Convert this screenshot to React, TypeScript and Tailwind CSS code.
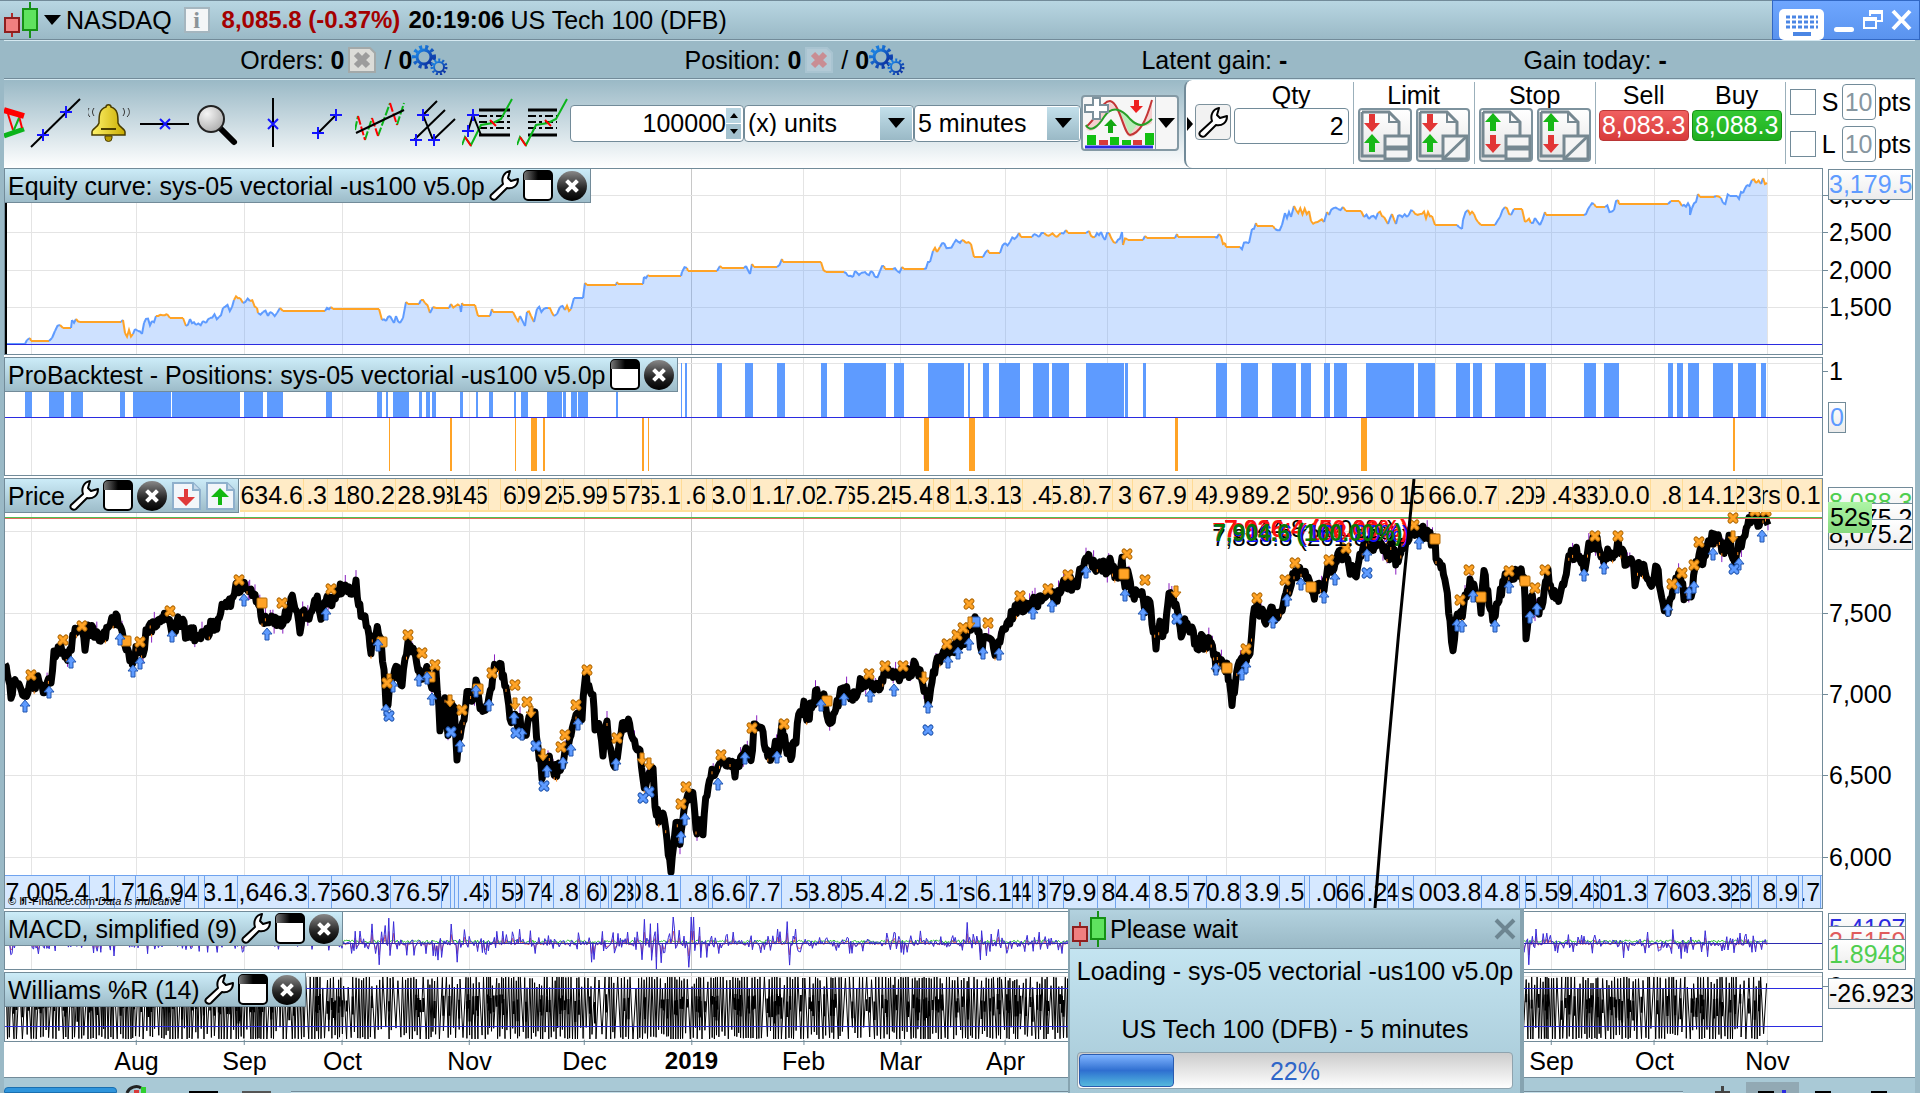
import { useState } from 'react';
import type { ReactNode } from 'react';

type Point = [number, number];
type MarkerKind = 'sellX' | 'buyX' | 'up' | 'down' | 'sellBox' | 'buyBox';

const MONTHS: [number, string][] = [
  [136, 'Aug'], [244, 'Sep'], [342, 'Oct'], [469, 'Nov'], [584, 'Dec'], [691, '2019'], [803, 'Feb'],
  [900, 'Mar'], [1005, 'Apr'], [1551, 'Sep'], [1654, 'Oct'], [1767, 'Nov'],
];
const GRID_X = [31, 136, 244, 342, 469, 584, 691, 803, 900, 1005, 1107, 1226, 1325, 1435, 1551, 1654, 1767];

// "o" starts a run spent out of the market, "b" a run with an open position
const EQUITY = `b5,344 25,344 27,340 30,338 o31,341 49,341 b52,338 55,331 60,325 o63,328 71,328 b72,320 76,319 o80,322 121,322 b123,320
o125,333 133,334 b135,329 138,331 142,334 144,323 152,321 156,316 o167,314 170,318 183,318 186,326 b190,319 196,325 203,321 206,323
210,318 219,317 223,308 232,307 234,300 o240,298 243,303 b250,301 o257,308 258,313 b263,312 268,316 270,312 277,313 280,308 o283,311
325,311 b331,307 o333,309 379,309 382,320 b386,321 390,316 394,323 396,316 400,323 403,318 406,302 o408,304 419,304 b421,300 o425,303
430,313 b433,307 o436,308 449,308 b451,304 o460,306 b461,312 462,303 o463,305 475,305 478,316 490,316 b492,309 o493,312 513,312
516,318 520,316 b525,326 527,312 o531,316 534,322 b537,309 548,308 o554,316 b557,314 560,307 565,310 o571,309 b574,298 583,298
585,283 o587,285 616,285 b617,282 o618,284 643,284 b644,277 648,275 o649,276 681,276 b682,272 687,268 o688,271 717,271 b720,266
o722,268 744,268 b746,266 750,274 752,264 o754,267 777,267 b782,259 o783,262 821,262 826,272 844,272 b848,276 853,277 855,271 861,273
871,271 875,277 880,271 884,266 o885,269 893,269 b897,271 902,267 o904,269 924,269 b930,262 933,251 o937,252 940,247 b944,243 949,248
954,243 962,240 o966,243 971,244 974,257 983,257 b988,250 o989,253 1000,253 b1005,243 1010,242 1019,233 o1021,237 1032,237 b1034,234
1039,237 1044,233 o1048,236 1057,237 1061,233 b1066,230 o1068,233 1086,233 b1089,231 o1095,237 b1101,232 1105,240 1109,233
o1116,243 b1122,232 1123,245 o1127,239 1128,240 1143,240 b1145,236 o1147,238 1175,238 b1177,234 o1178,237 1215,237 b1219,234
o1225,243 1226,247 1240,247 b1248,243 1249,243 1252,229 1256,223 o1257,226 1273,226 1275,229 b1282,225 1285,213 1291,217 1294,206
o1296,210 1309,211 1311,221 1324,222 b1327,212 o1329,215 b1338,209 1343,207 o1346,211 1361,211 1364,217 b1369,219 1378,213 o1384,217
1388,224 b1392,214 o1396,224 b1400,215 1407,217 1413,211 o1420,214 1432,216 1435,225 1457,225 b1459,227 1462,229 1463,220 1468,210
o1474,214 1478,222 1481,225 1495,225 b1500,217 1505,207 o1511,215 b1514,209 o1522,209 1525,222 1531,223 b1535,218 1540,225 1545,212
o1546,215 1584,215 b1590,206 1594,204 o1596,207 1605,207 b1614,210 1618,200 o1619,204 1668,204 b1671,201 o1679,201 1682,206
b1690,207 1690,215 1692,208 1698,194 o1700,197 1714,197 b1716,196 o1721,198 b1723,203 1730,196 1737,196 1743,193 1747,185 1752,180
o1756,183 1761,184 b1763,178 o1767,183`;

const LONGS = `25-32 49-64 71-83 120-125 133-171 172-240 244-263 267-283 326-332 377-382 386-388 393-409 419-422 426-430 432-436
460-463 476-478 489-493 514-516 521-528 547-562 563-566 571-577 578-588 616-618 681-682 685-687 717-722 745-753 777-785 821-827
844-886 894-904 928-964 968-970 983-989 999-1020 1033-1049 1052-1069 1086-1124 1125-1128 1143-1146 1216-1227 1241-1258 1272-1296
1301-1311 1324-1330 1334-1347 1366-1414 1418-1435 1456-1470 1473-1482 1495-1525 1530-1546 1584-1596 1604-1619 1668-1673 1677-1683
1688-1699 1713-1733 1738-1756 1761-1766`;
const SHORTS = '389-390 450-452 515-516 531-537 543-545 642-644 648-649 924-929 969-975 1175-1178 1361-1367 1733-1735';

const PRICE = `5,664 11,693 15,680 24,696 29,684 33,693 39,676 42,690 51,680 54,657 61,648 65,659 70,652 74,634 80,628 85,645 88,631
98,635 103,641 109,622 116,618 122,630 126,643 131,662 136,652 143,652 146,633 153,627 158,618 167,618 173,628 178,622 184,627
187,639 191,630 196,637 202,633 208,634 212,625 218,625 222,608 227,602 233,599 236,588 243,590 251,585 255,597 261,613 263,624
269,621 278,623 284,618 288,613 291,598 296,608 300,627 304,612 309,618 316,597 321,616 327,603 333,598 339,593 344,583 349,588
356,587 361,613 365,617 369,638 371,648 376,628 381,643 384,670 386,700 388,702 392,673 396,670 402,685 405,657 408,642 412,650
418,667 422,682 428,667 433,690 436,673 440,725 445,692 448,733 451,703 454,703 457,758 460,733 464,717 467,693 473,700 476,677
480,703 484,712 489,697 493,673 496,662 501,670 506,685 510,720 515,717 520,723 525,737 529,713 535,717 538,750 542,773 548,760
553,772 559,770 565,753 571,737 576,713 582,713 586,677 593,692 595,723 600,730 603,752 607,723 612,762 616,765 620,733 626,720
632,733 637,747 640,753 643,785 647,777 653,767 655,807 660,820 663,808 667,843 671,873 676,817 680,840 684,807 688,798 694,798
696,832 698,823 703,833 707,790 712,775 718,768 721,760 726,768 730,757 735,772 742,757 746,745 751,757 754,730 758,728 763,737
769,757 773,748 779,747 782,730 787,752 792,753 796,737 800,710 804,708 808,717 813,702 818,692 824,697 827,715 831,718 837,703
843,688 849,692 854,697 859,685 867,683 878,690 884,673 892,677 898,680 906,667 909,678 914,667 920,673 924,687 928,700 932,683
936,667 941,657 947,652 953,647 959,642 966,637 971,633 975,613 979,637 982,648 986,637 990,632 995,650 1000,643 1004,630 1007,622
1014,613 1020,605 1024,610 1031,600 1039,602 1045,593 1056,597 1061,587 1069,583 1076,585 1082,567 1090,558 1096,567 1100,560
1106,572 1110,558 1116,580 1122,560 1125,583 1129,570 1133,598 1137,587 1142,597 1145,607 1150,598 1152,627 1156,645 1160,627
1164,633 1169,597 1176,603 1180,633 1186,622 1192,630 1197,648 1200,638 1204,645 1210,642 1216,663 1220,657 1227,670 1232,700
1238,667 1244,660 1250,650 1253,620 1257,603 1261,613 1267,620 1271,612 1276,618 1282,612 1286,593 1290,587 1294,573 1301,573
1308,580 1312,597 1318,588 1324,585 1329,567 1334,567 1339,553 1345,553 1349,567 1355,575 1361,550 1365,545 1372,545 1379,537
1387,560 1392,547 1397,562 1402,547 1409,537 1416,532 1423,532 1430,537 1435,543 1436,560 1441,563 1446,587 1450,617 1453,655
1456,620 1461,617 1465,600 1470,582 1475,587 1479,603 1481,607 1484,573 1489,603 1494,620 1499,600 1504,577 1510,573 1517,572
1524,577 1526,632 1531,600 1539,610 1543,597 1548,573 1553,593 1560,595 1565,573 1570,553 1579,553 1585,568 1590,543 1597,542
1601,560 1609,553 1615,558 1618,545 1625,560 1631,555 1635,582 1640,565 1645,570 1650,588 1657,563 1663,607 1668,615 1673,583
1680,573 1684,593 1690,598 1696,567 1699,552 1704,562 1707,542 1717,538 1723,555 1729,538 1734,562 1739,545 1745,542 1749,520
1753,513 1758,523 1768,522`;

const MARKERS: Record<MarkerKind, string> = {
  sellBox: '262,603 126,641 382,642 430,677 478,689 827,701 1124,574 1227,668 1311,587 1435,539 1481,597 1525,581',
  buyBox: '975,622',
  down: '389,680 450,701 515,704 531,712 543,755 642,759 649,764 924,678 970,623 1176,592 1733,537',
  up: `25,706 49,692 71,662 120,639 133,671 140,663 172,636 244,600 267,634 326,614 378,645 386,710 393,686 419,680 427,678
432,699 460,746 476,691 489,705 514,718 522,734 547,771 563,763 571,750 578,724 616,764 681,837 685,819 718,784 745,758 777,757
821,705 844,699 870,696 894,690 928,707 948,662 958,653 969,644 983,653 999,654 1033,613 1052,606 1086,572 1125,595 1143,614
1216,669 1242,674 1246,667 1273,622 1287,600 1301,584 1324,597 1335,579 1367,555 1419,543 1457,625 1462,626 1473,596 1495,626
1509,587 1530,617 1537,609 1584,575 1604,568 1668,610 1677,587 1689,593 1694,587 1713,554 1739,564 1762,536`,
  sellX: `31,675 63,640 82,626 140,642 170,611 239,580 282,603 331,589 387,683 408,635 422,653 435,665 462,710 492,673 515,685
527,702 561,747 565,735 576,705 587,670 617,738 686,787 681,804 721,755 752,728 784,724 869,674 885,666 903,666 947,644 957,635
963,628 969,604 988,623 1020,596 1048,589 1068,575 1127,554 1145,580 1246,649 1257,598 1285,580 1295,563 1329,560 1346,548
1414,525 1460,600 1469,570 1509,571 1535,588 1545,570 1595,536 1618,536 1672,584 1682,573 1694,565 1699,542 1733,518 1755,511 1766,511`,
  buyX: '389,716 451,732 516,733 536,746 544,786 649,792 643,798 928,730 1177,619 1367,573 1734,569',
};

// start x | visible tail of the label
const HIGHS = `240|634.6 304|.3 328|1 348|80.2 396|28.9 447|8 455|14 478|6 489| 501|6 518|0 527|9 542|2 559|5 564|5.9 597|9 609|5
627|7 642|3 652|5.1 682|.6 707| 713|3.0 747| 751|1.1 787|7.0 817|2.7 849|65.2 892|45.4 934|8 951|1 969|.3 989|.1 1011|3 1023|.4
1053|5.8 1084|0.7 1113|3 1133|67.9 1188| 1193|4 1210|9.9 1240|89.2 1291|5 1312|0 1325|2.9 1351|5 1361|6 1375|0 1395|1 1414|5
1426|66.0 1478|.7 1499|.2 1526|0 1536|9 1547|.4 1573|3 1588|3 1600|0 1610|10.0 1651|.8 1683|14.1 1737|2 1747|3 1763|rs 1782|0.1`;
const LOWS = `5|7,005.4 90|.1 115|7 136|16.9 185|4 199| 205|3.1 238|,646.3 309|.7 332|560.3 391|76.5 442|7 451| 455| 459|.4 484|6
491| 497|5 516|9 525|7 542|4 554|.8 580| 586|6 601|0 609| 612|2 628|3 636|0 643|8.1 681|.8 709| 713|6.6 747| 750|7.7 782|.5
810|3.8 842|05.4 886|.2 909|.5 935|.1 960|rs 977|6.1 1013|4 1023|4 1033| 1039|3 1048|7 1064|9.9 1098|8 1117|4.4 1151|8.5 1190|7
1208|0.8 1242|3.9 1281|.5 1306| 1311|.0 1338|6 1351|6 1366|.2 1389|4 1400|s 1415|003.8 1483|4.8 1521| 1527|5 1538|.5 1560|9
1574|.4 1595|6 1602|01.3 1649|7 1669|603.3 1733|2 1742|6 1753| 1760|8 1778|.9 1800| 1804|.7`;

const toPoints = (s: string): Point[] => s.trim().split(/\s+/).map((p) => p.split(',').map(Number) as Point);
const toRanges = (s: string): Point[] => s.trim().split(/\s+/).map((p) => p.split('-').map(Number) as Point);

const makeRandom = (seed: number) => {
  let s = seed;
  return () => {
    s = (s * 1664525 + 1013904223) % 4294967296;
    return s / 4294967296;
  };
};

const buildEquity = () => {
  const rnd = makeRandom(7);
  const runs: { color: string; d: string }[] = [];
  let area = 'M5,344';
  let last: Point = [5, 344];
  let color = '#5e9bff';
  EQUITY.trim().split(/\s+/).forEach((raw) => {
    if (raw[0] === 'b') color = '#5e9bff';
    if (raw[0] === 'o') color = '#ffa326';
    const [x, y] = raw.replace(/[bo]/, '').split(',').map(Number);
    const steps = y === last[1] ? 1 : Math.max(1, Math.floor((x - last[0]) / 2));
    let d = `M${last[0]},${last[1]}`;
    for (let i = 1; i <= steps; i++) {
      const jitter = i < steps ? (rnd() - 0.5) * 8 : 0;
      const px = last[0] + ((x - last[0]) * i) / steps;
      const py = last[1] + ((y - last[1]) * i) / steps + jitter;
      d += ` L${px.toFixed(1)},${py.toFixed(1)}`;
      area += ` L${px.toFixed(1)},${py.toFixed(1)}`;
    }
    runs.push({ color, d });
    last = [x, y];
  });
  return { runs, area: `${area} L1767,344 Z` };
};

const buildPrice = () => {
  const rnd = makeRandom(21);
  const pts = toPoints(PRICE);
  let line = `M${pts[0][0]},${pts[0][1]}`;
  let purple = '';
  let orange = '';
  for (let i = 1; i < pts.length; i++) {
    const [x0, y0] = pts[i - 1];
    const [x1, y1] = pts[i];
    const steps = Math.max(1, Math.round((x1 - x0) / 1.3));
    for (let k = 1; k <= steps; k++) {
      const x = x0 + ((x1 - x0) * k) / steps;
      const y = y0 + ((y1 - y0) * k) / steps + (rnd() - 0.5) * 14;
      line += ` L${x.toFixed(1)},${y.toFixed(1)}`;
      if (rnd() > 0.85) purple += `M${x.toFixed(1)},${(y - 10).toFixed(1)}v${(5 + rnd() * 16).toFixed(1)}`;
      if (rnd() > 0.92) orange += `M${x.toFixed(1)},${(y + 2).toFixed(1)}v3`;
    }
  }
  return { line, purple, orange };
};

const buildMacd = () => {
  const rnd = makeRandom(5);
  const bursts: [number, number, number][] = [
    [15, 10, 9], [125, 10, 12], [255, 15, 12], [385, 18, 20], [450, 22, 20], [510, 16, 10], [585, 12, 18], [655, 14, 22],
    [683, 18, 28], [700, 14, 14], [790, 18, 12], [910, 10, 10], [975, 18, 14], [1250, 40, 12], [1528, 8, 18], [1635, 14, 10], [1690, 20, 8],
  ];
  let blue = 'M5,943';
  let red = 'M5,943';
  let green = 'M5,943';
  for (let x = 6; x < 1768; x += 1.2) {
    const amp = bursts.reduce((a, [c, w, h]) => a + h * Math.exp(-(((x - c) / w) ** 2)), 8);
    const r = (rnd() - 0.5) * 2;
    const swing = Math.abs(r) * 3 + Math.abs(r) ** 5 * amp;
    const y = 943 - Math.sign(r) * Math.min(26, swing);
    blue += ` L${x.toFixed(1)},${y.toFixed(1)}`;
    red += ` L${x.toFixed(1)},${(943 + (y - 943) * 0.5 + 1).toFixed(1)}`;
    green += ` L${x.toFixed(1)},${(940 + rnd() * 3).toFixed(1)}`;
  }
  return { blue, red, green };
};

const buildWilliams = () => {
  const rnd = makeRandom(99);
  let line = 'M5,1000';
  let core = '';
  let x = 5;
  let top = true;
  while (x < 1765) {
    x += rnd() > 0.9 ? 3 : 0.7 + rnd() * 1.2;
    const y = top ? 977 + rnd() ** 4 * 12 : 1039 - rnd() ** 4 * 12;
    line += ` L${x.toFixed(1)},${y.toFixed(1)}`;
    top = !top;
    if (rnd() > 0.7) core += `M${x.toFixed(1)},${(994 + rnd() * 8).toFixed(1)}v${(8 + rnd() * 14).toFixed(1)}`;
  }
  return { line, core };
};

const equity = buildEquity();
const price = buildPrice();
const macd = buildMacd();
const williams = buildWilliams();

/* ---------- small icons ---------- */

const Candles = () => (
  <svg width="35" height="36" viewBox="0 0 35 36" className="shrink-0">
    <path d="M8 11v24" stroke="#b02a2a" strokeWidth="2" />
    <rect x="1" y="16" width="14" height="14" fill="#f08080" stroke="#8e1f1f" strokeWidth="2" />
    <path d="M26 0v36" stroke="#159115" strokeWidth="2" />
    <rect x="19" y="7" width="14" height="21" fill="#5fe35f" stroke="#159115" strokeWidth="2" />
  </svg>
);

const WrenchIcon = () => (
  <svg width="30" height="31" viewBox="0 0 30 31" className="shrink-0">
    <path
      d="M2 25 L14 14 C12 8 15 2 21 1 L19 8 L22 11 L29 9 C29 16 24 19 18 18 L7 29 C4 31 0 28 2 25Z"
      fill="#fff" stroke="#000" strokeWidth="2" strokeLinejoin="round"
    />
  </svg>
);

const WindowIcon = () => (
  <svg width="30" height="31" viewBox="0 0 30 31" className="shrink-0">
    <defs>
      <linearGradient id="winTop" x1="0" y1="0" x2="1" y2="0">
        <stop offset="0" stopColor="#777" />
        <stop offset="0.5" stopColor="#000" />
      </linearGradient>
    </defs>
    <rect x="1" y="1" width="28" height="29" rx="4" fill="#fff" stroke="#000" strokeWidth="2" />
    <path d="M1 10V5a4 4 0 0 1 4-4h20a4 4 0 0 1 4 4v5Z" fill="url(#winTop)" />
  </svg>
);

const CloseIcon = () => (
  <svg width="30" height="30" viewBox="0 0 30 30" className="shrink-0">
    <defs>
      <linearGradient id="closeBg" x1="0" y1="0" x2="0" y2="1">
        <stop offset="0" stopColor="#888" />
        <stop offset="0.6" stopColor="#222" />
        <stop offset="1" stopColor="#000" />
      </linearGradient>
    </defs>
    <circle cx="15" cy="15" r="15" fill="url(#closeBg)" />
    <path d="M11 11l8 8M19 11l-8 8" stroke="#fff" strokeWidth="4" strokeLinecap="square" />
  </svg>
);

const PageArrow = ({ up }: { up?: boolean }) => (
  <svg width="29" height="28" viewBox="0 0 29 28" className="shrink-0">
    <path d="M1 1h20l7 7v19H1Z" fill="#f2f6fa" stroke="#8fb0cc" strokeWidth="2" />
    <path d="M21 1v7h7" fill="#c5d8e8" stroke="#8fb0cc" strokeWidth="2" />
    {up ? (
      <path d="M14 6l9 9h-7v8h-4v-8H5Z" fill="#12b812" />
    ) : (
      <path d="M14 24l-9-9h7V7h4v8h7Z" fill="#e03a3a" />
    )}
  </svg>
);

const GearsIcon = () => (
  <svg width="36" height="30" viewBox="0 0 36 30" className="shrink-0">
    <defs>
      <linearGradient id="gear" x1="0" y1="0" x2="1" y2="1">
        <stop offset="0" stopColor="#1e8be8" />
        <stop offset="1" stopColor="#0a2a9c" />
      </linearGradient>
    </defs>
    <circle cx="12" cy="12" r="10" fill="none" stroke="url(#gear)" strokeWidth="4" strokeDasharray="3 3" />
    <circle cx="12" cy="12" r="7" fill="none" stroke="url(#gear)" strokeWidth="3" />
    <circle cx="27" cy="22" r="7" fill="none" stroke="url(#gear)" strokeWidth="3" strokeDasharray="2 2" />
    <circle cx="27" cy="22" r="5" fill="none" stroke="url(#gear)" strokeWidth="2" />
  </svg>
);

const CancelIcon = ({ red }: { red?: boolean }) => (
  <svg width="28" height="26" viewBox="0 0 28 26" className="shrink-0">
    <path d="M1 1h21l5 5v19H1Z" fill={red ? '#b3cad6' : '#dcdcd8'} stroke={red ? '#a9c4d1' : '#a3a9a9'} strokeWidth="2" />
    <path d="M8 7l12 12M20 7L8 19" stroke={red ? '#c98d93' : '#9c9c9c'} strokeWidth="6" />
  </svg>
);

const Caret = () => (
  <svg width="17" height="10" viewBox="0 0 17 10" className="shrink-0">
    <path d="M0 0h17L8 10Z" />
  </svg>
);

const Cross = ({ x, y }: { x: number; y: number }) => (
  <path d={`M${x - 6} ${y}h12M${x} ${y - 6}v12`} stroke="#1414ff" strokeWidth="2" />
);

const OrderTypeIcon = ({ upFirst, slash }: { upFirst?: boolean; slash?: boolean }) => (
  <svg width="50" height="50" viewBox="0 0 50 50">
    <path d="M2 2h27l10 10v14M2 2v44h22" fill="none" stroke="#768891" strokeWidth="3" />
    <path d="M29 2v10h10" fill="none" stroke="#768891" strokeWidth="2" />
    <path d={upFirst ? 'M12 3l8 9h-5v9H9v-9H4Z' : 'M12 22l-8-9h5V4h6v9h5Z'} fill={upFirst ? '#18b818' : '#e23636'} />
    <path d={upFirst ? 'M12 43l-8-9h5v-9h6v9h5Z' : 'M12 24l8 9h-5v9H9v-9H4Z'} fill={upFirst ? '#e23636' : '#18b818'} />
    <rect x="25" y="26" width="24" height="23" fill="#f4f4f4" stroke="#768891" strokeWidth="3" />
    <path d={slash ? 'M25 49l24-23' : 'M25 38h24'} stroke="#768891" strokeWidth={slash ? 3 : 5} />
  </svg>
);

const DrawingTools = () => (
  <div className="flex items-center">
    <svg width="23" height="50" viewBox="0 0 23 50" aria-label="Pattern">
      <path d="M0 12l20 6" stroke="red" strokeWidth="6" />
      <path d="M0 38l20-7" stroke="#0bb41a" strokeWidth="5" />
      <path d="M4 16l5 16M15 18l3 12" stroke="red" strokeWidth="2" fill="none" />
      <path d="M9 34l6-14" stroke="#0bb41a" strokeWidth="2" />
    </svg>
    <svg width="61" height="50" viewBox="0 0 61 50">
      <path d="M4 49L53 1" stroke="#000" strokeWidth="2" />
      <Cross x={16} y={37} />
      <Cross x={39} y={14} />
    </svg>
    <svg width="52" height="50" viewBox="0 0 52 50">
      <defs>
        <linearGradient id="bell" x1="0" y1="0" x2="1" y2="0">
          <stop offset="0" stopColor="#fff36b" />
          <stop offset="1" stopColor="#c9ab00" />
        </linearGradient>
      </defs>
      <path d="M18 9c0-3 5-3 5 0 7 2 7 9 7 16 1 4 7 6 7 9v3H4v-3c0-3 6-5 7-9 0-7 0-14 7-16Z" fill="url(#bell)" stroke="#4a3d00" strokeWidth="1.5" />
      <path d="M13 31h15" stroke="#4a3d00" strokeWidth="2" />
      <path d="M17 38h7v2a3 3 0 0 1-7 0Z" fill="#b89b00" stroke="#4a3d00" />
      <path d="M1 10c-2 3-2 6 1 9M6 10c-2 3-2 5 0 8M40 10c2 3 2 6-1 9M35 10c2 3 2 5 0 8" stroke="#333" fill="none" />
    </svg>
    <svg width="52" height="50" viewBox="0 0 52 50">
      <path d="M0 26h49" stroke="#000" strokeWidth="2" />
      <path d="M20 21l10 10M30 21L20 31" stroke="#1414ff" strokeWidth="2" />
    </svg>
    <svg width="62" height="50" viewBox="0 0 62 50">
      <defs>
        <radialGradient id="lens" cx="0.35" cy="0.3" r="0.8">
          <stop offset="0" stopColor="#f5f5f5" />
          <stop offset="1" stopColor="#a8a8a8" />
        </radialGradient>
      </defs>
      <path d="M28 30l14 14" stroke="#000" strokeWidth="6" strokeLinecap="round" />
      <circle cx="19" cy="21" r="13" fill="url(#lens)" stroke="#222" strokeWidth="2" />
    </svg>
    <svg width="50" height="50" viewBox="0 0 50 50">
      <path d="M19 0v49" stroke="#000" strokeWidth="2" />
      <path d="M14 21l10 10M24 21L14 31" stroke="#1414ff" strokeWidth="2" />
    </svg>
    <svg width="51" height="50" viewBox="0 0 51 50">
      <path d="M14 35l18-18" stroke="#000" strokeWidth="2" />
      <Cross x={14} y={35} />
      <Cross x={32} y={17} />
    </svg>
    <svg width="54" height="50" viewBox="0 0 54 50" fill="none" strokeWidth="2">
      <path d="M0 32l3-14M10 42l7-22M23 38l12-33M42 27l7-22" stroke="#0bb41a" strokeDasharray="9 2" />
      <path d="M3 18l7 24M17 20l6 18M35 5l7 22" stroke="red" strokeDasharray="9 2" />
      <path d="M1 35l48-23" stroke="#000" />
    </svg>
    <svg width="53" height="50" viewBox="0 0 53 50" strokeWidth="2">
      <path d="M14 17L28 3M5 42l31-30M24 42l22-21M14 17l10 25" stroke="#000" />
      <Cross x={14} y={17} />
      <Cross x={7} y={42} />
      <Cross x={25} y={42} />
    </svg>
    <svg width="55" height="50" viewBox="0 0 55 50" fill="none" strokeWidth="2">
      <path d="M17 12h31M17 37h31" stroke="#000" strokeWidth="3" />
      <path d="M17 18h31M17 24h31M17 30h31" stroke="#000" strokeWidth="2" strokeDasharray="8 3 3 3" />
      <path d="M0 47l3-8 6 8 10-20 12-2 8-4 11-20" stroke="#0bb41a" />
      <path d="M3 39l6 9M28 22l6 6" stroke="red" />
      <path d="M6 33l5-16 8 20" stroke="#000" />
      <Cross x={11} y={17} />
      <Cross x={6} y={33} />
    </svg>
    <svg width="53" height="50" viewBox="0 0 53 50" fill="none" strokeWidth="2">
      <path d="M11 12h29M11 37h29" stroke="#000" strokeWidth="3" />
      <path d="M11 18h29M11 24h29M11 30h29" stroke="#000" strokeWidth="2" strokeDasharray="8 3 3 3" />
      <path d="M0 47l3-8 6 8 10-20 12-2 8-4 11-20" stroke="#0bb41a" />
      <path d="M3 39l6 9M28 22l6 6" stroke="red" />
    </svg>
  </div>
);

const IndicatorIcon = () => (
  <svg width="70" height="52" viewBox="0 0 70 52">
    <path d="M2 32C12 24 18 8 26 6C34 6 40 40 46 40C54 40 60 24 68 6V26C58 34 52 24 42 18C34 10 26 10 18 24C12 34 6 36 2 32Z" fill="#f6cfcf" />
    <path d="M30 14c8 0 10 10 16 24 2-4 6-8 8-12-8-2-14-12-24-12Z" fill="#b9edb9" />
    <path d="M2 30C14 20 18 4 26 4C36 6 40 38 46 38C56 36 62 24 68 3" fill="none" stroke="#c33636" strokeWidth="2" />
    <path d="M2 28C6 36 14 30 20 20C28 8 38 12 46 22C54 30 60 30 68 22" fill="none" stroke="#27a027" strokeWidth="2" />
    <path d="M9 1h7v7h8v7h-8v7H9v-7H1V8h8Z" fill="#fff" stroke="#7c909b" strokeWidth="2" />
    <path d="M52 16l-6-7h4V3h5v6h4Z" fill="#ee2222" />
    <path d="M27 22l6 7h-4v7h-5v-7h-4Z" fill="#12a812" />
    <path d="M3 38h9v10H3ZM26 40h9v8h-9ZM38 43h9v5h-9ZM61 36h9v12h-9Z" fill="#12c012" />
    <path d="M15 43h9v5h-9ZM49 43h9v5h-9Z" fill="#d83a3a" />
    <path d="M1 50h68" stroke="#2a2ae0" strokeWidth="3" />
  </svg>
);

/* ---------- bars ---------- */

const TitleBar = () => (
  <header className="flex h-10 items-center border-y border-[#728b99] bg-gradient-to-b from-[#b8d6e2] to-[#9ab9c6] pl-1">
    <Candles />
    <button aria-label="Instrument list" className="ml-[5px] mr-[5px] p-0"><Caret /></button>
    <span>NASDAQ</span>
    <button aria-label="Instrument information" className="ml-3 flex h-[26px] w-[26px] items-center justify-center border-2 border-[#a5b6bf] bg-[#f4f6f7] font-['Liberation_Serif',serif] text-2xl font-bold leading-none text-[#8b9499]">
      i
    </button>
    <strong className="ml-3 text-2xl text-[#a40000]">8,085.8 (-0.37%)</strong>
    <strong className="ml-2 text-2xl">20:19:06</strong>
    <h1 className="ml-[6px]">US Tech 100 (DFB)</h1>
    <div className="ml-auto flex h-10 w-[148px] items-center gap-1 border border-[#3268c4] bg-gradient-to-b from-[#6ea6ff] to-[#5a93ee] pl-[6px]">
      <button aria-label="Keyboard" className="mt-2">
        <svg width="45" height="31" viewBox="0 0 45 31">
          <rect width="45" height="31" rx="5" fill="#fff" />
          <path d="M7 8h32M7 13h32M7 18h32" stroke="#4b86e4" strokeWidth="3" strokeDasharray="4 2" />
          <path d="M14 25h18" stroke="#4b86e4" strokeWidth="4" />
        </svg>
      </button>
      <button aria-label="Minimize" className="ml-[6px] flex h-8 w-6 items-end">
        <span className="mb-1 h-[5px] w-5 rounded-sm bg-white" />
      </button>
      <button aria-label="Restore">
        <svg width="22" height="22" viewBox="0 0 22 22" fill="none" stroke="#fff" strokeWidth="2">
          <path d="M8 7V2h12v10h-5M8 4h12" />
          <path d="M2 9h12v10H2ZM2 11h12" />
        </svg>
      </button>
      <button aria-label="Close" className="ml-0.5">
        <svg width="24" height="24" viewBox="0 0 24 24">
          <path d="M3 3l17 18M20 3L3 21" stroke="#fff" strokeWidth="4" />
        </svg>
      </button>
    </div>
  </header>
);

const AccountBar = () => (
  <div className="flex h-[39px] items-center justify-evenly border-b border-t border-b-[#728b99] border-t-[#d5e9f1] bg-[#9ab9c6] pr-3">
    <div className="flex items-center">
      <span>Orders: <b>0</b></span>
      <button aria-label="Cancel all orders" className="ml-1"><CancelIcon /></button>
      <span className="ml-2">/ <b>0</b></span>
      <GearsIcon />
    </div>
    <div className="flex items-center">
      <span>Position: <b>0</b></span>
      <button aria-label="Close position" className="ml-1"><CancelIcon red /></button>
      <span className="ml-2">/ <b>0</b></span>
      <GearsIcon />
    </div>
    <span>Latent gain: <b>-</b></span>
    <span>Gain today: <b>-</b></span>
  </div>
);

const Dropdown = ({ label, options, width }: { label: string; options: string[]; width: string }) => (
  <div className={`relative h-[37px] ${width}`}>
    <select aria-label={label} className="h-full w-full appearance-none rounded-sm border border-[#728b99] bg-white pl-[3px] leading-none">
      {options.map((o) => <option key={o}>{o}</option>)}
    </select>
    <span className="pointer-events-none absolute right-0.5 top-0.5 flex h-[33px] w-8 items-center justify-center bg-gradient-to-b from-[#c3e0eb] to-[#9ab9c6]">
      <Caret />
    </span>
  </div>
);

const OrderPair = ({ title, upFirst }: { title: string; upFirst?: boolean }) => (
  <div className="flex h-full flex-col items-center border-l border-[#9bb0bb] px-1">
    <span className="leading-[26px]">{title}</span>
    <div className="flex gap-1">
      {[false, true].map((slash) => (
        <button key={String(slash)} aria-label={`${title} order ${slash ? 'with level' : 'split'}`} className="rounded-sm border-2 border-[#7d929d] bg-gradient-to-b from-white to-[#e4e4e4]">
          <OrderTypeIcon upFirst={upFirst} slash={slash} />
        </button>
      ))}
    </div>
  </div>
);

const PointsRow = ({ name }: { name: string }) => (
  <div className="flex items-center">
    <input id={`use-${name}`} type="checkbox" className="h-[26px] w-[26px] appearance-none border border-[#728b99] bg-white" />
    <label htmlFor={`use-${name}`} className="ml-[6px] w-[20px]">{name}</label>
    <input aria-label={`${name} points`} defaultValue="10" className="h-[36px] w-[34px] rounded-sm border border-[#728b99] bg-white pl-[2px] text-[#8796a0]" />
    <span className="ml-0.5">pts</span>
  </div>
);

const OrderPanel = () => (
  <section aria-label="Order entry" className="ml-auto flex h-full rounded-l-lg border-l-2 border-[#728b99] bg-white pb-1 pt-0.5">
    <svg width="9" height="20" viewBox="0 0 9 20" className="mt-[32px]">
      <path d="M1 3v14l6-7Z" />
    </svg>
    <button aria-label="Order settings" className="mt-[22px] flex h-[36px] w-9 items-center justify-center rounded-sm border border-[#7d929d] bg-[#f2f2f2]">
      <WrenchIcon />
    </button>
    <div className="ml-[3px] mr-1 flex w-[115px] flex-col items-center">
      <label htmlFor="qty" className="leading-[26px]">Qty</label>
      <input id="qty" defaultValue="2" className="h-[36px] w-full rounded-sm border border-[#728b99] bg-white pr-1 text-right" />
    </div>
    <OrderPair title="Limit" />
    <OrderPair title="Stop" upFirst />
    <div className="flex h-full gap-[3px] border-l border-[#9bb0bb] px-[3px]">
      <div className="flex w-[90px] flex-col items-center">
        <span className="leading-[26px]">Sell</span>
        <button className="mt-0.5 h-[31px] w-full rounded-sm border border-[#b93636] bg-gradient-to-b from-[#f06060] to-[#d83a3a] leading-none text-white">8,083.3</button>
      </div>
      <div className="flex w-[90px] flex-col items-center">
        <span className="leading-[26px]">Buy</span>
        <button className="mt-0.5 h-[31px] w-full rounded-sm border border-[#159115] bg-gradient-to-b from-[#33c833] to-[#1fae1f] leading-none text-white">8,088.3</button>
      </div>
    </div>
    <div className="flex h-full flex-col gap-[6px] border-l border-[#9bb0bb] pl-1 pr-1 pt-0.5">
      <PointsRow name="S" />
      <PointsRow name="L" />
    </div>
  </section>
);

const Toolbar = () => {
  const [units, setUnits] = useState(100000);
  return (
    <div className="flex h-[89px] border-t border-[#d5e9f1] bg-gradient-to-b from-[#9ab9c6] to-white">
      <div className="flex h-[86px] items-center">
        <DrawingTools />
        <div className="flex h-[37px] w-[174px] rounded-sm border border-[#728b99] bg-white p-0.5">
          <input aria-label="Number of units" value={units} onChange={(e) => setUnits(Number(e.target.value))} className="w-full min-w-0 text-right leading-none" />
          <div className="flex w-[15px] shrink-0 flex-col gap-px">
            <button aria-label="More units" onClick={() => setUnits(units + 1)} className="flex flex-1 items-center justify-center bg-[#b8d4e0]">
              <svg width="8" height="5" viewBox="0 0 8 5"><path d="M0 5h8L4 0Z" /></svg>
            </button>
            <button aria-label="Fewer units" onClick={() => setUnits(units - 1)} className="flex flex-1 items-center justify-center bg-[#a3c1ce]">
              <svg width="8" height="5" viewBox="0 0 8 5"><path d="M0 0h8L4 5Z" /></svg>
            </button>
          </div>
        </div>
        <Dropdown label="Unit type" options={['(x) units']} width="w-[170px]" />
        <Dropdown label="Time frame" options={['5 minutes']} width="w-[167px]" />
        <div className="flex h-[56px] rounded-sm border-2 border-[#8499a4] bg-[#f6f6f6]">
          <button aria-label="Add indicator" className="border-r border-[#8499a4] px-px"><IndicatorIcon /></button>
          <button aria-label="Indicator menu" className="px-0.5"><Caret /></button>
        </div>
      </div>
      <OrderPanel />
    </div>
  );
};

/* ---------- chart panes ---------- */

const PaneTitle = ({ title, wrench, arrows }: { title: string; wrench?: boolean; arrows?: boolean }) => (
  <div className="absolute left-0 top-0 z-10 flex h-[34px] items-center gap-1 border-b border-r border-[#728b99] bg-gradient-to-b from-[#ccecf8] to-[#9dbcc9] pl-[3px] pr-[3px]">
    <h2 className="whitespace-nowrap">{title}</h2>
    {wrench && <button aria-label={`${title} settings`}><WrenchIcon /></button>}
    <button aria-label={`Maximize ${title}`}><WindowIcon /></button>
    <button aria-label={`Close ${title}`}><CloseIcon /></button>
    {arrows && <button aria-label="Sell stop" className="ml-px"><PageArrow /></button>}
    {arrows && <button aria-label="Buy stop" className="ml-px"><PageArrow up /></button>}
  </div>
);

type PaneProps = {
  top: number;
  height: number;
  box: string;
  rows?: number[];
  ticks?: [number, string][];
  title: ReactNode;
  overlay?: ReactNode;
  tags?: ReactNode;
  children: ReactNode;
};

const Pane = ({ top, height, box, rows = [], ticks = [], title, overlay, tags, children }: PaneProps) => (
  <section className={`flex ${box}`}>
    <div className="relative min-w-0 flex-1 border border-[#728b99] bg-white">
      <svg className="absolute inset-0 h-full w-full" viewBox={`5 ${top + 1} 1817 ${height - 2}`} preserveAspectRatio="none">
        <g stroke="#e4e4e4" shapeRendering="crispEdges">
          {GRID_X.map((x) => <path key={x} d={`M${x}.5 ${top}v${height}`} stroke={x === 691 ? '#c8c8c8' : undefined} />)}
          {rows.map((y) => <path key={y} d={`M5 ${y}.5h1817`} />)}
        </g>
        {children}
      </svg>
      {overlay}
      {title}
    </div>
    <div className="relative w-[92px] shrink-0 bg-white">
      {ticks.map(([y, label]) => (
        <div key={label} className="absolute left-0 flex -translate-y-1/2 items-center leading-[30px]" style={{ top: `${((y - top) / height) * 100}%` }}>
          <span className="mr-px h-px w-[5px] bg-[#728b99]" />
          {label}
        </div>
      ))}
      {tags}
    </div>
  </section>
);

const tagBase = 'absolute left-[5px] border border-[#728b99] bg-gradient-to-b from-white to-[#ececec] leading-[29px]';

const Bars = ({ ranges, y, h, fill }: { ranges: Point[]; y: number; h: number; fill: string }) => (
  <g fill={fill} shapeRendering="crispEdges">
    {ranges.map(([a, b]) => <rect key={a} x={a} y={y} width={b - a} height={h} />)}
  </g>
);

const Marker = ({ kind, x, y }: { kind: MarkerKind; x: number; y: number }) => {
  const buy = kind === 'up' || kind === 'buyX' || kind === 'buyBox';
  const fill = buy ? '#5e9bff' : '#ffa326';
  const edge = buy ? '#2257b0' : '#b36a06';
  if (kind === 'sellBox' || kind === 'buyBox') {
    return <rect x={x - 5} y={y - 5} width="10" height="10" rx="1" fill={fill} stroke={edge} />;
  }
  if (kind === 'up' || kind === 'down') {
    const s = kind === 'up' ? 1 : -1;
    return (
      <path
        d={`M${x} ${y - 6 * s}l5 ${6 * s}h-3v${6 * s}h-4v${-6 * s}h-3Z`}
        fill={fill} stroke={edge}
      />
    );
  }
  const d = `M${x - 3} ${y - 3}l6 6M${x + 3} ${y - 3}l-6 6`;
  return (
    <g strokeLinecap="round">
      <path d={d} stroke={edge} strokeWidth="5" />
      <path d={d} stroke={fill} strokeWidth="3" />
    </g>
  );
};

const ValueStrip = ({ data, kind }: { data: string; kind: 'high' | 'low' }) => {
  const cells = data.trim().split(/\s+(?=\d+\|)/).map((c) => c.split('|'));
  const total = 1822 - Number(cells[0][0]);
  const look = kind === 'high'
    ? 'ml-[235px] h-[33px] border-b-2 border-[#ffdf9b] bg-[#ffebc6]'
    : 'h-[33px] border-t border-[#6fa3ef] bg-[#d6e8ff]';
  const edge = kind === 'high' ? 'border-[#ffdb95]' : 'border-[#6fa3ef]';
  return (
    <div className={`flex overflow-hidden leading-[32px] ${look}`}>
      {cells.map(([x, text], i) => {
        const next = i + 1 < cells.length ? Number(cells[i + 1][0]) : 1822;
        return (
          <span
            key={x}
            className={`flex shrink-0 justify-end overflow-hidden whitespace-nowrap border-r ${edge}`}
            style={{ width: `${((next - Number(x)) / total) * 100}%` }}
          >
            {text}
          </span>
        );
      })}
    </div>
  );
};

const RetracementLabels = () => (
  <div className="absolute left-[66%] top-[38px] ml-[8px] whitespace-nowrap text-2xl leading-[24px]">
    <span className="absolute left-0 top-[9px]">7,838.8 (261.80%)</span>
    <span className="absolute left-3 top-0">7,944.8 (0.00%)</span>
    <span className="absolute left-3 top-0 font-bold text-[#ff1010]">7,926.4 (50.00%)</span>
    <span className="absolute left-0 top-[3px] text-[#ff1010]">7,901.4 (138.20%)</span>
    <span className="absolute left-0 top-[5px] text-[#1414ff]">7,916.6 (161.80%)</span>
    <span className="absolute left-px top-1 text-[23px] font-bold text-[#087808]">7,904.6 (100.00%)</span>
  </div>
);

const Charts = () => (
  <main className="flex flex-1 flex-col gap-0.5 bg-white">
    <Pane
      top={168} height={187} box="h-[187px]" rows={[195, 232, 270, 307]}
      ticks={[[195, '3,000'], [232, '2,500'], [270, '2,000'], [307, '1,500']]}
      title={<PaneTitle title="Equity curve: sys-05 vectorial -us100 v5.0p" wrench />}
      tags={<span className={`${tagBase} top-px text-[#5e9bff]`}>3,179.5</span>}
    >
      <path d={equity.area} fill="#5e9bff" fillOpacity="0.3" />
      {equity.runs.map((r, i) => <path key={i} d={r.d} fill="none" stroke={r.color} strokeWidth="2" />)}
      <path d="M5 344.5h1817" stroke="#2b2be0" />
      <path d="M6 169v186" stroke="#000" strokeWidth="2" />
    </Pane>

    <Pane
      top={357} height={119} box="h-[119px]" rows={[363]} ticks={[[371, '1']]}
      title={<PaneTitle title="ProBacktest - Positions: sys-05 vectorial -us100 v5.0p" />}
      tags={<span className={`${tagBase} top-[45px] px-px text-[#5e9bff]`}>0</span>}
    >
      <Bars ranges={toRanges(LONGS)} y={363} h={54} fill="#5e9bff" />
      <Bars ranges={toRanges(SHORTS)} y={418} h={53} fill="#ffa326" />
      <path d="M5 417.5h1817" stroke="#2b2be0" />
    </Pane>

    <Pane
      top={478} height={431} box="min-h-[431px] flex-1" rows={[531, 613, 694, 775, 857]}
      ticks={[[613, '7,500'], [694, '7,000'], [775, '6,500'], [857, '6,000']]}
      title={<PaneTitle title="Price" wrench arrows />}
      overlay={
        <div className="relative flex h-full flex-col justify-between">
          <ValueStrip data={HIGHS} kind="high" />
          <RetracementLabels />
          <ValueStrip data={LOWS} kind="low" />
          <small className="absolute bottom-0 left-[3px] text-[11px] leading-[13px]">© IT-Finance.com <i>Data is indicative</i></small>
          <svg className="absolute inset-0 h-full w-full" viewBox="5 479 1817 429" preserveAspectRatio="none">
            <path d="M1414 479Q1392 690 1375 908" fill="none" stroke="#000" strokeWidth="3" />
          </svg>
        </div>
      }
      tags={
        <>
          <span className={`${tagBase} top-[9px] text-[#4fce4f]`}>8,088.3</span>
          <span className={`${tagBase} top-[25px]`}>8,075.2</span>
          <span className={`${tagBase} top-[41px]`}>8,075.2</span>
          <span className="absolute left-[5px] top-[24px] bg-gradient-to-b from-[#aef5a6] to-[#86d97e] px-0.5 leading-[31px]">52s</span>
        </>
      }
    >
      <path d={price.purple} stroke="#8a1fc0" fill="none" />
      <path d={price.line} fill="none" stroke="#000" strokeWidth="7" strokeLinejoin="round" />
      <path d={price.orange} stroke="#ff8a1a" fill="none" strokeWidth="1" />
      <path d="M5 518.5h1817" stroke="#e26a5a" />
      <path d="M5 517.5h1817" stroke="#4fbf4f" />
      {(Object.keys(MARKERS) as MarkerKind[]).map((kind) =>
        toPoints(MARKERS[kind]).map(([x, y]) => <Marker key={`${kind}${x}`} kind={kind} x={x} y={y} />)
      )}
    </Pane>

    <Pane
      top={911} height={59} box="h-[59px]"
      title={<PaneTitle title="MACD, simplified (9)" wrench />}
      tags={
        <>
          <span className={`${tagBase} top-0.5 text-[#2b2be0]`}>5.4107</span>
          <span className={`${tagBase} top-[15px] text-[#e05c5c]`}>3.5159</span>
          <span className={`${tagBase} top-[28px] text-[#4fce4f]`}>1.8948</span>
        </>
      }
    >
      <path d={macd.green} stroke="#2fbf2f" fill="none" />
      <path d={macd.red} stroke="#e06060" fill="none" />
      <path d={macd.blue} stroke="#3a2bd8" fill="none" />
      <path d="M5 943.5h1817" stroke="#2b2bb0" />
    </Pane>

    <Pane
      top={972} height={70} box="h-[70px]" rows={[976]} ticks={[[986, '0']]}
      title={<PaneTitle title="Williams %R (14)" wrench />}
      tags={<span className={`${tagBase} top-[6px]`}>-26.923</span>}
    >
      <path d={williams.core} stroke="#000" strokeWidth="2" fill="none" />
      <path d={williams.line} stroke="#000" strokeLinejoin="bevel" fill="none" />
      <path d="M5 988.5h1817M5 1026.5h1817" stroke="#2b2be0" />
    </Pane>
  </main>
);

const TimeAxis = () => (
  <div className="h-[35px] bg-white pr-[92px]">
    <div className="relative h-full">
      {MONTHS.map(([x, label]) => (
        <div key={x} className="absolute -top-0.5 flex -translate-x-1/2 flex-col items-center leading-[36px]" style={{ left: `${((x - 3.5) / 1819) * 100}%` }}>
          <span className="h-[5px] w-px bg-[#728b99]" />
          <span className={label === '2019' ? '-mt-0.5 text-2xl font-bold leading-[36px]' : '-mt-0.5'}>{label}</span>
        </div>
      ))}
    </div>
  </div>
);

const BottomBar = () => (
  <footer className="flex h-4 items-end overflow-hidden border-t border-[#728b99] bg-[#a9c9d6]">
    <span className="h-[6px] w-[113px] rounded-t-sm border border-[#1a6fb0] bg-[#2f95dc]" />
    <svg width="24" height="8" viewBox="0 0 24 8" className="ml-2">
      <path d="M2 8c2-6 10-8 14-5" fill="none" stroke="#222" strokeWidth="3" />
      <rect x="16" y="2" width="5" height="6" fill="#2fd02f" />
      <rect x="9" y="5" width="5" height="3" fill="#d83a3a" />
    </svg>
    <span className="ml-10 h-0.5 w-[29px] bg-black" />
    <span className="ml-6 h-0.5 w-[29px] bg-[#555]" />
    <span className="ml-5 h-0.5 flex-1 border-t border-[#728b99] bg-[#c6dfe9]" />
    <span className="ml-8 h-[7px] w-[15px] border-b-2 border-[#444] bg-[linear-gradient(to_right,transparent_6px,#444_6px,#444_9px,transparent_9px)]" />
    <span className="ml-4 flex h-[11px] w-[53px] items-end gap-2 bg-[#92a9b4] pl-3">
      <span className="h-0.5 w-4 bg-black" />
      <span className="h-[3px] w-1 bg-[#2b2be0]" />
    </span>
    <span className="ml-4 h-0.5 w-4 bg-black" />
    <span className="ml-10 mr-7 h-0.5 w-4 bg-black" />
  </footer>
);

const LoadingDialog = () => (
  <div role="dialog" aria-label="Please wait" className="absolute left-[1068px] top-[908px] z-20 h-[185px] w-[456px] border-l-2 border-r-4 border-t-2 border-[#86a3b0] bg-gradient-to-b from-[#ccecf8] to-[#a6c8d6]">
    <div className="flex h-[39px] items-center border-b border-[#728b99] bg-gradient-to-b from-[#b3d2df] to-[#9ab9c6] pl-0.5">
      <Candles />
      <h2 className="ml-[3px]">Please wait</h2>
      <button aria-label="Dismiss" className="ml-auto mr-1">
        <svg width="22" height="24" viewBox="0 0 22 24">
          <path d="M2 3l18 18M20 3L2 21" stroke="#6d8591" strokeWidth="4" />
        </svg>
      </button>
    </div>
    <p className="mt-[7px] whitespace-nowrap text-center leading-[30px]">Loading - sys-05 vectorial -us100 v5.0p</p>
    <p className="mt-7 whitespace-nowrap text-center leading-[30px]">US Tech 100 (DFB) - 5 minutes</p>
    <div role="progressbar" aria-valuenow={22} aria-label="Loading" className="relative mx-[7px] mt-2 h-[37px] rounded-sm border border-[#8ea3ae] bg-gradient-to-b from-[#cccccc] to-white p-px">
      <div className="h-full rounded-sm border border-[#2a5cb0] bg-gradient-to-b from-[#7fb4ff] via-[#2f6fd0] to-[#56b8dc]" style={{ width: '22%' }} />
      <span className="absolute inset-0 text-center leading-[36px] text-[#2f66c8]">22%</span>
    </div>
  </div>
);

const App = () => (
  <div className="relative flex min-h-screen flex-col overflow-hidden font-['Liberation_Sans',Arial,sans-serif] text-[25px] leading-8 text-black">
    <TitleBar />
    <div className="flex flex-1 flex-col border-l-4 border-r-[5px] border-[#9ab9c6]">
      <AccountBar />
      <Toolbar />
      <Charts />
      <TimeAxis />
      <BottomBar />
    </div>
    <LoadingDialog />
  </div>
);

export default App;
